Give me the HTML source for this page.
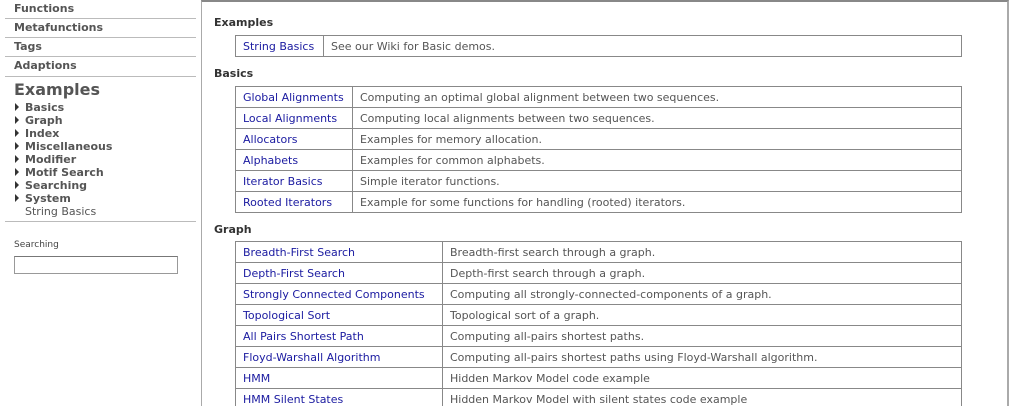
<!DOCTYPE html>
<html style="width:1009px;height:406px;overflow:hidden"><head><meta charset="utf-8"><style>
*{margin:0;padding:0;box-sizing:border-box}
body{width:1009px;height:406px;overflow:hidden;background:#fff;font-family:"DejaVu Sans","Liberation Sans",sans-serif;font-size:11px;color:#555;position:relative}
#wrap{position:absolute;left:0;top:0;width:1009px;height:406px;overflow:hidden}
#frame{position:absolute;left:201px;top:0;width:808px;height:406px;border-top:2px solid #888;border-right:2px solid #aaa;border-left:1px solid #aaa}
#side{position:absolute;left:0;top:0;width:202px;height:406px}
.nav{position:absolute;left:14px;font-weight:bold;font-size:11px;color:#555}
.sep{position:absolute;left:5px;width:191px;height:1px;background:#bbb}
.tree{position:absolute;left:14px;font-size:11px;font-weight:bold;color:#555;line-height:13px}
.tree div:before{content:"";display:inline-block;width:0;height:0;border-left:4px solid #333;border-top:4px solid transparent;border-bottom:4px solid transparent;margin:0 6px 0 1px}
.tree div.x:before{display:none}
h2{position:absolute;left:214px;font-size:11px;font-weight:bold;color:#333}
table{position:absolute;left:235px;border-collapse:collapse}
td{border:1px solid #888;height:21px;padding:0 7px;white-space:nowrap;color:#555}
td a{color:#1a1aa0;text-decoration:none}
</style></head><body><div id="wrap">
<div id="frame"></div>
<div id="side">
<div class="nav" style="top:2px">Functions</div>
<div class="sep" style="top:18px"></div>
<div class="nav" style="top:21px">Metafunctions</div>
<div class="sep" style="top:37px"></div>
<div class="nav" style="top:40px">Tags</div>
<div class="sep" style="top:56px"></div>
<div class="nav" style="top:59px">Adaptions</div>
<div class="sep" style="top:76px"></div>
<div class="nav" style="top:80px;font-size:16px">Examples</div>
<div class="tree" style="top:101px">
<div>Basics</div><div>Graph</div><div>Index</div><div>Miscellaneous</div><div>Modifier</div><div>Motif Search</div><div>Searching</div><div>System</div>
<div style="font-weight:normal;padding-left:11px" class="x">String Basics</div>
</div>
<div class="sep" style="top:221px"></div>
<div style="position:absolute;left:14px;top:240px;font-size:9px;color:#444">Searching</div>
<div style="position:absolute;left:14px;top:256px;width:164px;height:18px;border:1px solid #999;border-top-color:#777"></div>
</div>
<h2 style="top:16px">Examples</h2>
<table style="top:35px;width:727px"><tr><td style="width:88px"><a>String Basics</a></td><td>See our Wiki for Basic demos.</td></tr></table>
<h2 style="top:67px">Basics</h2>
<table style="top:86px;width:727px">
<tr><td style="width:117px"><a>Global Alignments</a></td><td>Computing an optimal global alignment between two sequences.</td></tr>
<tr><td><a>Local Alignments</a></td><td>Computing local alignments between two sequences.</td></tr>
<tr><td><a>Allocators</a></td><td>Examples for memory allocation.</td></tr>
<tr><td><a>Alphabets</a></td><td>Examples for common alphabets.</td></tr>
<tr><td><a>Iterator Basics</a></td><td>Simple iterator functions.</td></tr>
<tr><td><a>Rooted Iterators</a></td><td>Example for some functions for handling (rooted) iterators.</td></tr>
</table>
<h2 style="top:223px">Graph</h2>
<table style="top:241px;width:727px">
<tr><td style="width:207px"><a>Breadth-First Search</a></td><td>Breadth-first search through a graph.</td></tr>
<tr><td><a>Depth-First Search</a></td><td>Depth-first search through a graph.</td></tr>
<tr><td><a>Strongly Connected Components</a></td><td>Computing all strongly-connected-components of a graph.</td></tr>
<tr><td><a>Topological Sort</a></td><td>Topological sort of a graph.</td></tr>
<tr><td><a>All Pairs Shortest Path</a></td><td>Computing all-pairs shortest paths.</td></tr>
<tr><td><a>Floyd-Warshall Algorithm</a></td><td>Computing all-pairs shortest paths using Floyd-Warshall algorithm.</td></tr>
<tr><td><a>HMM</a></td><td>Hidden Markov Model code example</td></tr>
<tr><td><a>HMM Silent States</a></td><td>Hidden Markov Model with silent states code example</td></tr>
</table>
</div></body></html>
